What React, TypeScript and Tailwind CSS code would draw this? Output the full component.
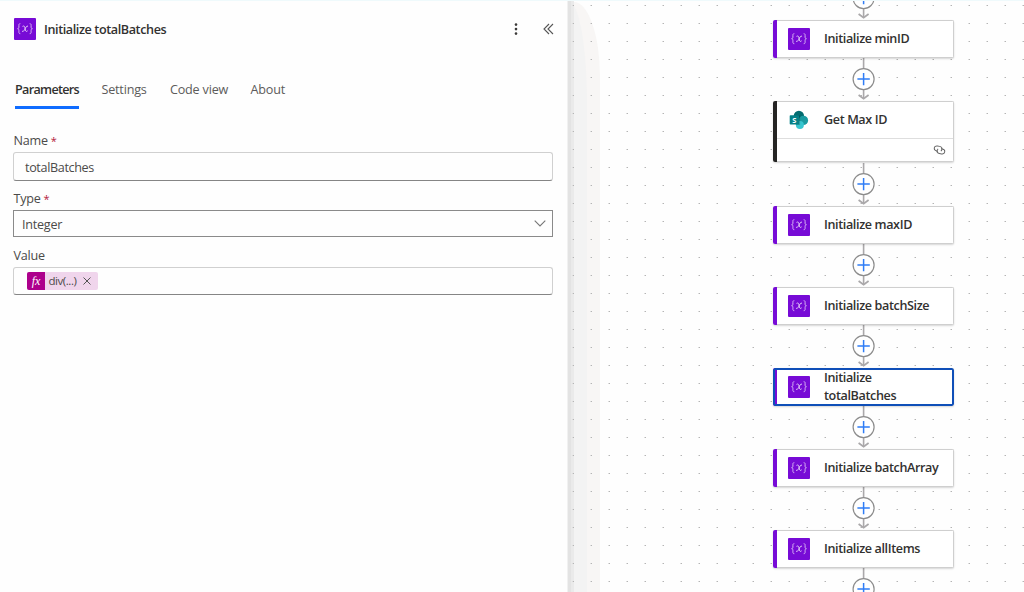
import { useState } from "react"

interface FlowNode {
  id: string
  label: string
  kind: "variable" | "sharepoint"
}

const flowNodes: FlowNode[] = [
  { id: "minID", label: "Initialize minID", kind: "variable" },
  { id: "getMaxID", label: "Get Max ID", kind: "sharepoint" },
  { id: "maxID", label: "Initialize maxID", kind: "variable" },
  { id: "batchSize", label: "Initialize batchSize", kind: "variable" },
  { id: "totalBatches", label: "Initialize totalBatches", kind: "variable" },
  { id: "batchArray", label: "Initialize batchArray", kind: "variable" },
  { id: "allItems", label: "Initialize allItems", kind: "variable" },
]

const tabs = [
  { name: "Parameters", width: "w-[64px]" },
  { name: "Settings", width: "w-[46px]" },
  { name: "Code view", width: "w-[58px]" },
  { name: "About", width: "w-[36px]" },
]

function VariableIcon() {
  return (
    <svg className="block h-[22px] w-[22px] shrink-0" viewBox="0 0 22 22" fill="none">
      <rect width="22" height="22" rx="1" fill="#770bd6" />
      <path
        d="M6.3 5.7C4.8 5.7 4.9 6.5 4.9 7.6V9C4.9 10.1 4.5 10.6 3.6 10.7C4.5 10.8 4.9 11.3 4.9 12.4V13.8C4.9 14.9 4.8 15.7 6.3 15.7M15.7 5.7C17.2 5.7 17.1 6.5 17.1 7.6V9C17.1 10.1 17.5 10.6 18.4 10.7C17.5 10.8 17.1 11.3 17.1 12.4V13.8C17.1 14.9 17.2 15.7 15.7 15.7"
        stroke="#d9b5f4"
        strokeWidth="1"
      />
      <path
        d="M8.5 8.4C10 7.5 10.7 8.2 11 9.9L11.4 12C11.7 13.5 12.4 13.9 13.6 12.8M14 8.1C12.4 7.8 11.5 9.8 10.8 11.3C10 12.9 9.3 13.9 8 13.2"
        stroke="#e0c3f7"
        strokeWidth="1"
      />
    </svg>
  )
}

function SharePointIcon() {
  return (
    <svg className="block h-[22px] w-[22px] shrink-0" viewBox="0 0 22 22">
      <circle cx="10.9" cy="7" r="5.2" fill="#036c70" />
      <circle cx="15.4" cy="11.4" r="4.7" fill="#1a9ba1" />
      <circle cx="11.9" cy="16" r="4" fill="#37c6d0" />
      <path d="M7 6.3h4.3a.8.8 0 0 1 .8.8v9H8a4 4 0 0 1-1-2z" fill="#000" opacity=".2" />
      <rect x="1.7" y="6.3" width="9.3" height="9.2" rx=".8" fill="#058087" />
      <text
        x="6.35"
        y="13.6"
        textAnchor="middle"
        fill="#fff"
        fontSize="7.5"
        fontWeight="700"
        fontFamily="Open Sans, sans-serif"
      >
        S
      </text>
    </svg>
  )
}

function Connector() {
  return (
    <svg className="block h-[43px] w-[24px]" viewBox="0 0 24 43" fill="none">
      <path d="M11.6 0V11M11.6 32V41" stroke="#aaa8aa" strokeWidth="1.6" />
      <path d="M6.6 37L11.6 40.8L16.6 37" stroke="#aaa8aa" strokeWidth="1.7" />
      <circle cx="11.6" cy="21.1" r="10.5" fill="#fff" stroke="#8c8c8c" strokeWidth="1.2" />
      <path d="M11.6 14.9V27.3M5.4 21.1H17.8" stroke="#2f7df6" strokeWidth="1.5" />
    </svg>
  )
}

function NodeCard({ node, selected, onSelect }: { node: FlowNode; selected: boolean; onSelect: () => void }) {
  const isVariable = node.kind === "variable"
  return (
    <div
      onClick={onSelect}
      className={`relative flex w-[181px] cursor-pointer overflow-hidden rounded-[2px] bg-white shadow-[0_1px_2px_rgba(0,0,0,0.16)] ${
        isVariable ? "h-[38px]" : "mb-px h-[61px]"
      }`}
    >
      <div className={`w-1 shrink-0 ${isVariable ? "bg-[#770bd6]" : "bg-[#252423]"}`} />
      <div className="flex-1 border border-l-0 border-[#cfcfcf]">
        <div className="flex h-[36px] items-center pl-[11px]">
          {isVariable ? <VariableIcon /> : <SharePointIcon />}
          <span className="ml-[14px] max-w-[118px] text-[12.6px] leading-[18px] font-semibold tracking-[-0.38px] text-[#323130]">
            {node.label}
          </span>
        </div>
        {!isVariable && (
          <div className="flex h-[23px] items-center justify-end border-t border-[#dedede] pr-[7px]">
            <svg className="h-[10px] w-[13px] rotate-[10deg]" viewBox="0 0 13 10" fill="none" stroke="#666" strokeWidth="1">
              <path d="M5.2 6.4H3.8C2 6.4 1 5.3 1 3.9S2 1.4 3.8 1.4H6C7.8 1.4 8.8 2.5 8.8 3.9C8.8 4.7 8.5 5.3 8 5.8" />
              <path d="M7.8 3.5H9.2C11 3.5 12 4.6 12 6S11 8.5 9.2 8.5H7C5.2 8.5 4.2 7.4 4.2 6C4.2 5.2 4.5 4.6 5 4.1" />
            </svg>
          </div>
        )}
      </div>
      {selected && <div className="absolute inset-0 rounded-[2px] border-2 border-[#0f4fb8]" />}
    </div>
  )
}

function FieldLabel({ text, required }: { text: string; required?: boolean }) {
  return (
    <label className="block h-[18px] pl-[0.5px] text-[12.6px] leading-[18px] tracking-[-0.25px] text-[#4b4a49]">
      {text}
      {required && <span className="ml-[3px] text-[11px] text-[#b3203c]">*</span>}
    </label>
  )
}

export default function App() {
  const [activeTab, setActiveTab] = useState("Parameters")
  const [selectedId, setSelectedId] = useState("totalBatches")

  return (
    <div className="relative flex h-[592px] w-[1024px] overflow-hidden bg-[#fefefe] font-['Open_Sans',sans-serif]">
      {/* Details panel */}
      <aside className="relative z-10 h-full w-[567px] shrink-0 bg-[#fefefe] pl-[13px] pr-[14px]">
        <header className="flex h-[57px] items-center pl-px">
          <VariableIcon />
          <h1 className="ml-2 pt-[2px] text-[12.6px] leading-[18px] font-semibold tracking-[-0.4px] text-[#323130]">
            Initialize totalBatches
          </h1>
          <button className="ml-auto mr-[23px]">
            <svg className="h-[14px] w-[8px]" viewBox="0 0 8 14" fill="#3b3a39">
              <circle cx="4" cy="2.6" r="1.3" />
              <circle cx="4" cy="7.1" r="1.3" />
              <circle cx="4" cy="11.6" r="1.3" />
            </svg>
          </button>
          <button className="-mr-px">
            <svg className="h-[12px] w-[11px]" viewBox="0 0 11 12" fill="none" stroke="#555" strokeWidth="1.1">
              <path d="M6 1L1 6L6 11M10 1L5 6L10 11" />
            </svg>
          </button>
        </header>

        <nav className="mt-[20px] flex gap-[22.5px] pl-[2px]">
          {tabs.map((tab) => (
            <button
              key={tab.name}
              onClick={() => setActiveTab(tab.name)}
              className={`h-[32px] border-b-[3px] pb-[3px] text-left text-[12.6px] whitespace-nowrap ${tab.width} ${
                activeTab === tab.name
                  ? "border-[#0f6cff] font-semibold tracking-[-0.68px] text-[#323130]"
                  : "border-transparent tracking-[-0.2px] text-[#5c5b5a]"
              }`}
            >
              {tab.name}
            </button>
          ))}
        </nav>

        <section className="mt-[23px]">
          <FieldLabel text="Name" required />
          <div className="mt-[2px] flex h-[29px] items-center rounded-[3px] border border-[#d0d0d0] border-b-[#858585] pt-[3px] pl-[11px] text-[12.6px] tracking-[-0.35px] text-[#4b4a49]">
            totalBatches
          </div>
          <div className="mt-[9px]">
            <FieldLabel text="Type" required />
          </div>
          <div className="mt-[2px] flex h-[27px] items-center justify-between border border-[#8a8a8a] pr-[6px] pl-[8px] text-[12.6px] tracking-[-0.25px] text-[#4b4a49]">
            <span className="pt-[4px]">Integer</span>
            <svg className="h-[7px] w-[12px]" viewBox="0 0 12 7" fill="none" stroke="#777" strokeWidth="1.1">
              <path d="M.7.7L6 6L11.3.7" />
            </svg>
          </div>
          <div className="mt-[10px]">
            <FieldLabel text="Value" />
          </div>
          <div className="mt-[2px] flex h-[28px] items-center rounded-[3px] border border-[#d0d0d0] border-b-[#858585] pl-[13px]">
            <div className="flex h-[18px] w-[71px] items-center overflow-hidden rounded-[2px] bg-[#f0d5ec] text-[11.5px] text-[#4b4a49]">
              <span className="flex h-full w-[18px] items-center justify-center bg-[#ad008c] pb-px font-['Liberation_Serif',serif] text-[12px] text-white italic">
                fx
              </span>
              <span className="ml-[3.5px] tracking-[-0.45px]">div(...)</span>
              <svg className="ml-[7px] h-[8px] w-[8px]" viewBox="0 0 8 8" fill="none" stroke="#555" strokeWidth="1">
                <path d="M.5.5L7.5 7.5M7.5.5L.5 7.5" />
              </svg>
            </div>
          </div>
        </section>
      </aside>

      {/* Designer canvas */}
      <main className="relative flex-1 overflow-hidden">
        <div className="absolute top-[2px] left-0 h-[650px] w-[33px] rounded-tr-[26px_75px] bg-[#f8f6f5]" />
        <div className="absolute top-[2px] left-0 h-[650px] w-[20px] rounded-tr-[18px_100px] bg-[#f3f3f3]" />
        <div className="absolute top-0 left-0 h-full w-[7px] bg-[linear-gradient(90deg,#f1f1f1_0_1px,#e3e3e3_1px_4px,#eaeaea_4px_7px)]" />
        <svg className="absolute inset-0 h-full w-full">
          <pattern id="dots" x="5" y="4" width="18" height="18" patternUnits="userSpaceOnUse">
            <rect x="0" y="1" width="1" height="1" fill="#dcdcdc" />
            <rect x="1" y="1" width="1" height="1" fill="#b5b5b5" />
          </pattern>
          <rect width="100%" height="100%" fill="url(#dots)" />
        </svg>
        <div className="relative -mt-[23px] ml-[206px] flex w-[181px] flex-col items-center">
          {flowNodes.map((node) => (
            <div key={node.id} className="flex flex-col items-center">
              <Connector />
              <NodeCard node={node} selected={selectedId === node.id} onSelect={() => setSelectedId(node.id)} />
            </div>
          ))}
          <Connector />
        </div>
      </main>
      <div className="absolute top-0 left-0 z-20 h-px w-full bg-[#effafc]" />
    </div>
  )
}
